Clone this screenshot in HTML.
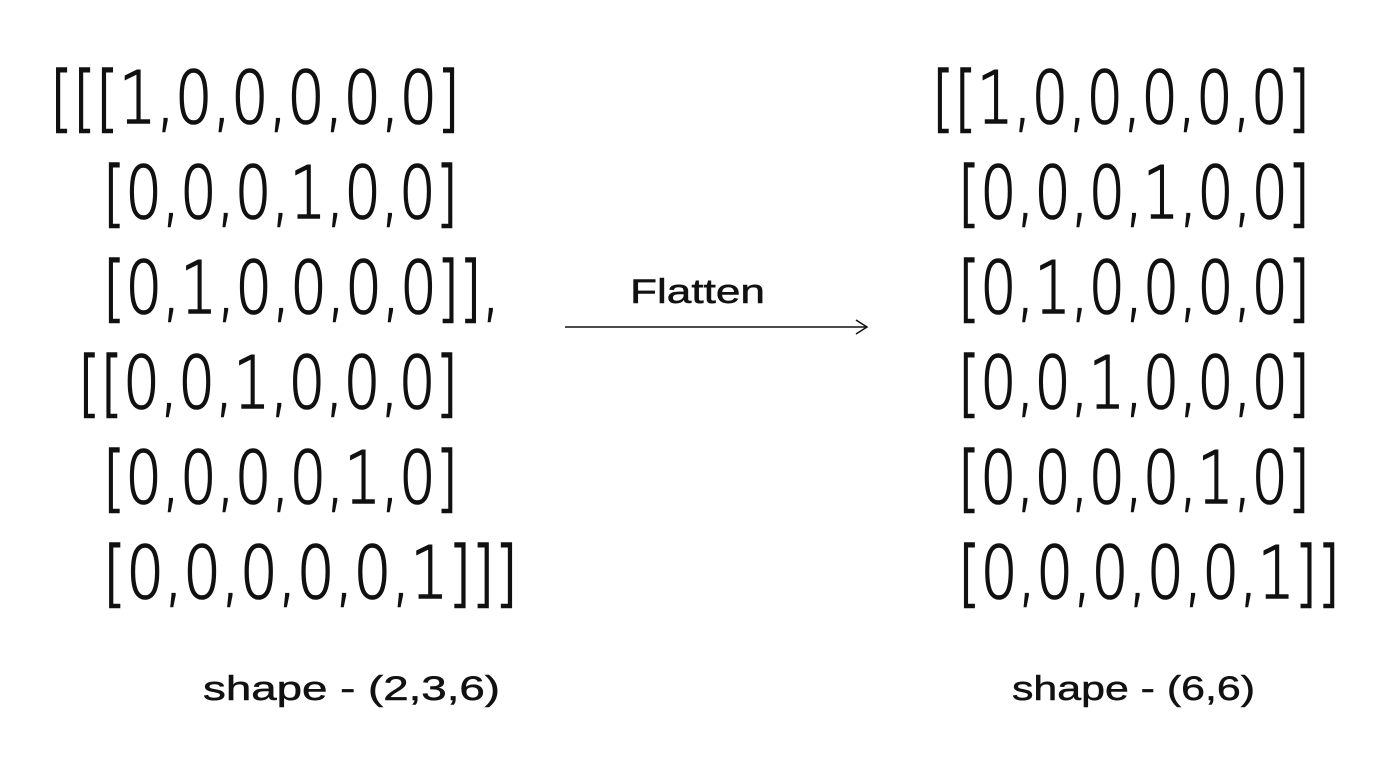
<!DOCTYPE html>
<html><head><meta charset="utf-8"><style>
html,body{margin:0;padding:0;background:#fff;width:1400px;height:757px;overflow:hidden}
text{font-family:"DejaVu Sans","Liberation Sans",sans-serif;font-weight:200;fill:#111}
.m{font-size:72px;stroke:#111;stroke-width:1.6px}
.s{font-size:34px;font-family:"Liberation Sans",sans-serif;font-weight:400;stroke:#111;stroke-width:0.5px}
</style></head><body>
<svg width="1400" height="757" viewBox="0 0 1400 757" xmlns="http://www.w3.org/2000/svg">
<text x="50" y="123" textLength="410" lengthAdjust="spacingAndGlyphs" class="m">[[[1,0,0,0,0,0]</text>
<text x="103" y="218" textLength="355" lengthAdjust="spacingAndGlyphs" class="m">[0,0,0,1,0,0]</text>
<text x="103" y="313" textLength="397" lengthAdjust="spacingAndGlyphs" class="m">[0,1,0,0,0,0]],</text>
<text x="78" y="408" textLength="380" lengthAdjust="spacingAndGlyphs" class="m">[[0,0,1,0,0,0]</text>
<text x="103" y="503" textLength="355" lengthAdjust="spacingAndGlyphs" class="m">[0,0,0,0,1,0]</text>
<text x="103" y="598" textLength="415" lengthAdjust="spacingAndGlyphs" class="m">[0,0,0,0,0,1]]]</text>

<text x="932" y="123" textLength="378" lengthAdjust="spacingAndGlyphs" class="m">[[1,0,0,0,0,0]</text>
<text x="958" y="218" textLength="352" lengthAdjust="spacingAndGlyphs" class="m">[0,0,0,1,0,0]</text>
<text x="958" y="313" textLength="352" lengthAdjust="spacingAndGlyphs" class="m">[0,1,0,0,0,0]</text>
<text x="958" y="408" textLength="352" lengthAdjust="spacingAndGlyphs" class="m">[0,0,1,0,0,0]</text>
<text x="958" y="503" textLength="352" lengthAdjust="spacingAndGlyphs" class="m">[0,0,0,0,1,0]</text>
<text x="958" y="598" textLength="382" lengthAdjust="spacingAndGlyphs" class="m">[0,0,0,0,0,1]]</text>

<text x="630" y="303" textLength="135" lengthAdjust="spacingAndGlyphs" class="s">Flatten</text>
<line x1="565" y1="327" x2="866" y2="327" stroke="#111" stroke-width="1.5"/>
<path d="M856 320 L867 327 L856 334" fill="none" stroke="#111" stroke-width="1.5"/>
<text x="203" y="700" textLength="297" lengthAdjust="spacingAndGlyphs" class="s">shape - (2,3,6)</text>
<text x="1012" y="700" textLength="243" lengthAdjust="spacingAndGlyphs" class="s">shape - (6,6)</text>
</svg>
</body></html>
